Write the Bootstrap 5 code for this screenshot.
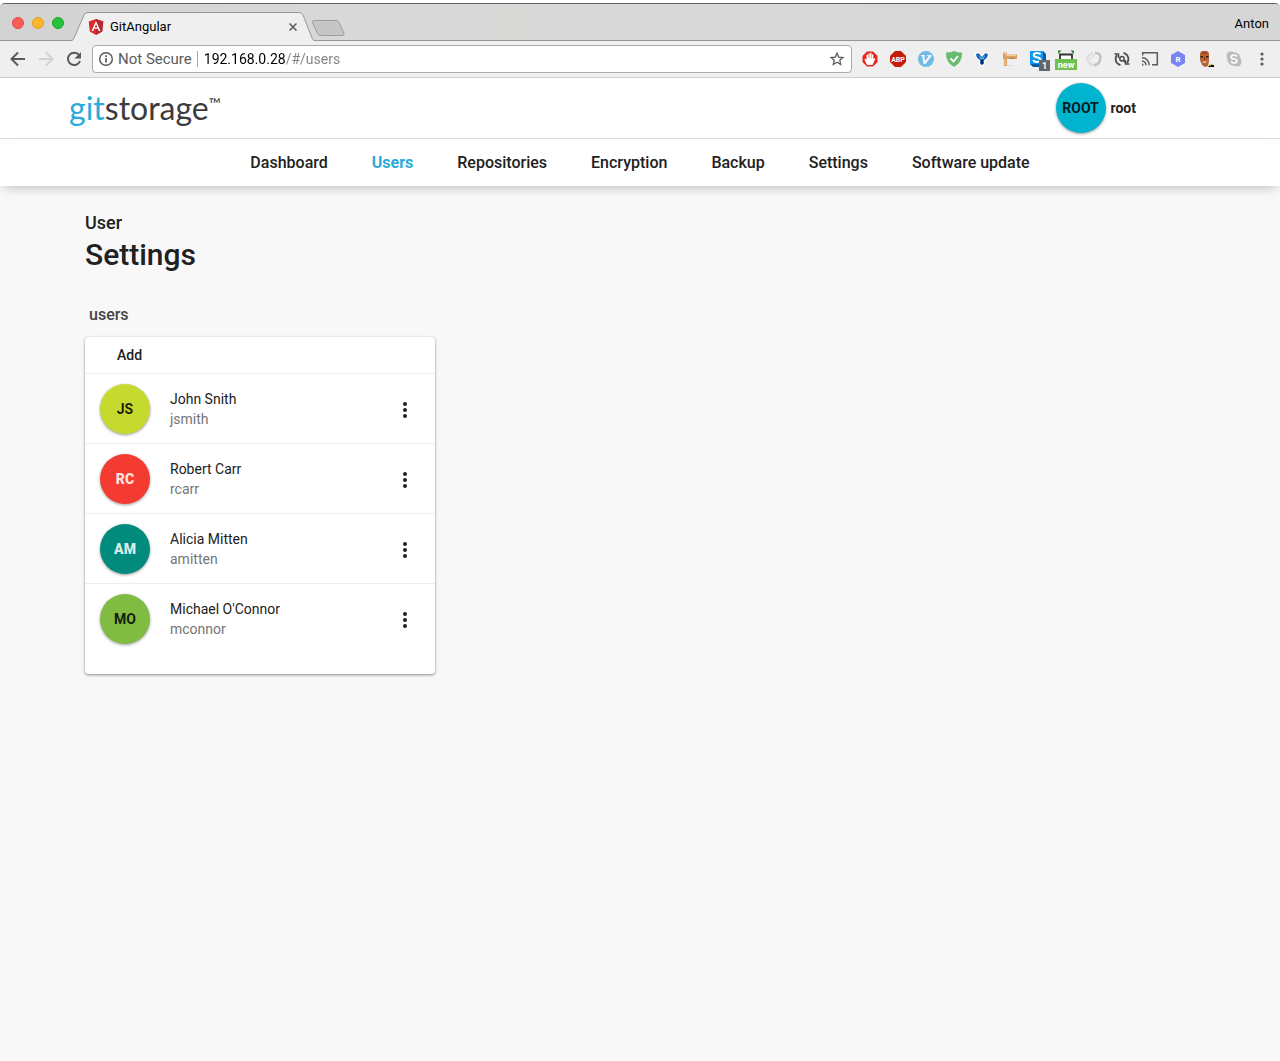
<!DOCTYPE html>
<html lang="en">
<head>
<meta charset="utf-8">
<meta name="viewport" content="width=device-width, initial-scale=1">
<title>GitAngular</title>
<link href="https://cdn.jsdelivr.net/npm/bootstrap@5.3.0/dist/css/bootstrap.min.css" rel="stylesheet">
<style>
  body { font-family: Roboto, "Liberation Sans", sans-serif; font-size: 14px; line-height: 20px; color: #212121; background: #fff; }
  button { font-family: inherit; }
  .window { min-height: calc(100vh - 3px); margin-top: 3px; background: #f8f8f8; border-top: 1px solid #5f5f62; border-radius: 5px 5px 0 0; overflow: hidden; }

  /* tab strip */
  .tab-strip { height: 37px; background: linear-gradient(90deg, #d2d2d2, #d9d9d8 30%, #d7d6d6); border-bottom: 1px solid #969696; padding: 0 11px 0 12px; font-size: 13px; color: #000; }
  .lights { gap: 8px; height: 38px; }
  .light { width: 12px; height: 12px; border-radius: 50%; border: 1px solid; padding: 0; }
  .light-close { background: #fc5b57; border-color: #e2463f; }
  .light-min { background: #fdb62c; border-color: #e0a022; }
  .light-max { background: #27c23c; border-color: #1ba72c; }
  .browser-tab { width: 242px; height: 29px; margin: 8px 0 -1px 8px; padding: 0 13px 0 16px; gap: 6px; }
  .tab-shape { position: absolute; left: 0; top: 0; z-index: -1; }
  .tab-close, .tool-btn, .more-btn { border: 0; background: none; padding: 0; display: flex; align-items: center; justify-content: center; }
  .tab-close { width: 16px; height: 16px; }

  /* toolbar */
  .toolbar { height: 37px; background: #efefef; border-bottom: 1px solid #cfcfcf; padding: 0 4px; }
  .tool-btn { width: 28px; height: 28px; flex: none; }
  .new-tab { width: 28px; height: 48px; }
  .tool-btn svg { display: block; overflow: visible; flex: none; }
  .address { height: 28px; background: #fff; border: 1px solid #a9a9a9; border-radius: 4px; font-size: 15px; margin: 0 4px; padding-left: 5px; }
  .secure-label { color: #5a5a5a; padding: 0 5px 0 4px; border-right: 1px solid #a5a5a5; line-height: 16px; white-space: nowrap; }
  .url-input { border: 0; outline: 0; padding: 0 0 0 6px; min-width: 0; height: 24px; font-size: 14px; color: transparent; background: linear-gradient(90deg, #000 88px, #808080 88px); -webkit-background-clip: text; background-clip: text; }

  /* application header */
  .app-container { --bs-gutter-x: 30px; max-width: 1140px; }
  .brand-bar { height: 61px; background: #fff; border-bottom: 1px solid #ddd; }
  .brand-word { font-family: Lato, sans-serif; font-size: 32px; line-height: 40px; color: #3c3c3e; text-decoration: none; margin: 0 0 0 -16px; }
  .brand-word b { font-weight: 400; color: #2babd9; }
  .brand-word sup { font-size: 16px; top: -10px; }
  .avatar { width: 50px; height: 50px; border-radius: 50%; font-weight: 700; color: rgba(0,0,0,.87); box-shadow: 0 1px 3px rgba(0,0,0,.4); flex: none; }
  .avatar-light { color: rgba(255,255,255,.87); font-weight: 900; }
  .bg-cyan { background: #00b4d0; }
  .bg-lime { background: #c6d92f; }
  .bg-red { background: #f43b31; }
  .bg-teal { background: #008b7c; }
  .bg-green { background: #7fbc41; }
  .account { gap: 5px; margin-right: 59px; padding: 0; border: 0; background: none; font-weight: 700; color: #212121; }
  .main-nav { height: 47px; background: #fff; box-shadow: 0 6px 10px -4px rgba(0,0,0,.22); font-size: 16px; font-weight: 500; }
  .main-nav .nav-link { padding: 0 22px; color: #212121; }
  .main-nav .nav-link.active { color: #2babd9; font-weight: 700; }

  /* page */
  .app-main { padding-top: 25px; }
  .page-kicker { font-size: 18px; line-height: 24px; font-weight: 500; margin: 0; }
  .page-title { font-size: 30px; line-height: 40px; font-weight: 500; margin: 0; }
  .section-name { font-size: 16px; line-height: 24px; font-weight: 500; color: #444; margin: 28px 0 10px 4px; }
  .user-card { max-width: 350px; border: 0; border-radius: 4px; box-shadow: 0 1px 3px rgba(0,0,0,.45); padding-bottom: 20px; }
  .add-btn { height: 37px; border: 0; border-bottom: 1px solid #eee; background: none; padding: 0 32px; text-align: left; font-weight: 500; color: #212121; }
  .user-row { height: 70px; padding: 0 15px; border-bottom: 1px solid #eee; color: #212121; }
  .user-row:last-child { border-color: transparent; }
  .login-name { color: #757575; }
  .more-btn { width: 30px; height: 30px; padding-top: 2px; }
</style>
<script src="https://cdn.jsdelivr.net/npm/bootstrap@5.3.0/dist/js/bootstrap.bundle.min.js"></script>
</head>
<body>
<div class="window">
  <div class="tab-strip d-flex align-items-start">
    <div class="lights d-flex align-items-center">
      <button class="light light-close" aria-label="Close window"></button>
      <button class="light light-min" aria-label="Minimise"></button>
      <button class="light light-max" aria-label="Full screen"></button>
    </div>
    <div class="browser-tab d-flex align-items-center position-relative z-1">
      <svg class="tab-shape" width="242" height="29"><path d="M0 28.500C1 28 1.500 27 2 26L12 3Q13.500.5 16 .5H227Q229.500.5 231 3L240 26C240.500 27 241 28 242 28.500V29H0Z" fill="#efefef"/><path d="M0 28.500C1 28 1.500 27 2 26L12 3Q13.500.5 16 .5H227Q229.500.5 231 3L240 26C240.500 27 241 28 242 28.500" fill="none" stroke="#969696"/></svg>
      <svg width="16" height="16" viewBox="0 0 16 16"><path d="M8 0 15.300 2.600 14.200 12.400 8 16 1.800 12.400.7 2.600Z" fill="#dd2a2f"/><path d="M8 0 15.300 2.600 14.200 12.400 8 16Z" fill="#b32a30"/><path d="M8 2 12.500 12H10.800L9.900 9.800H6.100L5.200 12H3.500ZM8 5.200 6.700 8.400H9.300Z" fill="#fff"/></svg>
      <span class="me-auto">GitAngular</span>
      <button class="tab-close" aria-label="Close tab"><svg width="8" height="8" viewBox="0 0 8 8"><path d="M.5.5l7 7M7.500.5l-7 7" stroke="#5a5a5a" stroke-width="1.500"/></svg></button>
    </div>
    <button class="tool-btn new-tab" aria-label="New tab"><svg width="32" height="16" viewBox="0 0 32 16"><path d="M2.500.5H24Q26 .5 27 2.500L32 13.500Q32.500 15.500 30 15.500H8.500Q6.500 15.500 5.500 13.500L.5 2.500Q0 .5 2.500.5Z" fill="#c6c6c6" stroke="#9b9b9b"/></svg></button>
    <span class="ms-auto align-self-center pt-1">Anton</span>
  </div>

  <div class="toolbar d-flex align-items-center">
    <button class="tool-btn" aria-label="Back"><svg width="16" height="16" viewBox="0 0 16 16" fill="none" stroke="#5a5a5a" stroke-width="2"><path d="M15 8H2M8 1.500 1.500 8 8 14.500"/></svg></button>
    <button class="tool-btn" aria-label="Forward" disabled><svg width="16" height="16" viewBox="0 0 16 16" fill="none" stroke="#d2d2d2" stroke-width="2"><path d="M1 8h13M8 1.500 14.500 8 8 14.500"/></svg></button>
    <button class="tool-btn" aria-label="Reload"><svg width="16" height="16" viewBox="0 0 16 16"><path d="M13.200 4.200A6.200 6.200 0 1 0 14 10" fill="none" stroke="#5a5a5a" stroke-width="2"/><path d="M15 1v6.500H8.500Z" fill="#5a5a5a"/></svg></button>
    <div class="address d-flex align-items-center flex-grow-1">
      <svg width="16" height="16" viewBox="0 0 16 16"><circle cx="8" cy="8" r="6.300" fill="none" stroke="#5a5a5a" stroke-width="1.500"/><path d="M7.200 7h1.700v4.500H7.200ZM7.200 4.300h1.700v1.700H7.200Z" fill="#5a5a5a"/></svg>
      <label class="secure-label" for="url">Not Secure</label>
      <input class="url-input flex-grow-1" id="url" type="text" value="192.168.0.28/#/users" spellcheck="false">
      <button class="tool-btn" aria-label="Bookmark"><svg width="14" height="14" viewBox="0 0 14 14"><path d="M7 1.200 8.700 5.100 13 5.500 9.800 8.300 10.700 12.500 7 10.300 3.300 12.500 4.200 8.300 1 5.500 5.300 5.100Z" fill="none" stroke="#5a5a5a" stroke-width="1.300"/></svg></button>
    </div>
    <button class="tool-btn" aria-label="AdBlock"><svg width="16" height="16" viewBox="0 0 16 16"><path d="M5 .5h6L15.500 5v6L11 15.500H5L.5 11V5Z" fill="#e8261d"/><path d="M5.200 14 3 10 2.600 7.500 4.500 8.600V4q.8-.8 1.400 0V7h.4V2.700q.8-.7 1.400 0V7h.4V2q.8-.7 1.400 0V7.300h.4V3.500q.8-.7 1.400 0V8L13 7q.5.500 0 1.500L10.500 14Z" fill="#fff"/></svg></button>
    <button class="tool-btn" aria-label="Adblock Plus"><svg width="16" height="16" viewBox="0 0 16 16"><path d="M5 0h6L16 5v6L11 16H5L0 11V5Z" fill="#c51c06"/><text x="8" y="10.500" text-anchor="middle" font-size="7" font-weight="700" fill="#fff">ABP</text></svg></button>
    <button class="tool-btn" aria-label="Vimeo helper"><svg width="16" height="16" viewBox="0 0 16 16"><circle cx="8" cy="8" r="8" fill="#72bbe8"/><path d="M3 4h4v1L6.500 5.500 7 10l3.500-4.500L9 4.500V4h4.500v1.200L7.500 13H5.500L4.300 5.500 3 5Z" fill="#eef7fd"/></svg></button>
    <button class="tool-btn" aria-label="AdGuard"><svg width="16" height="16" viewBox="0 0 16 16"><path d="M0 1.500Q4.500 1.500 8 0q3.500 1.500 8 1.500Q16.500 11.500 8 16-.5 11.500 0 1.500Z" fill="#68bc71"/><path d="m4.500 7.500 3 3L12 5" fill="none" stroke="#fff" stroke-width="1.800"/></svg></button>
    <button class="tool-btn" aria-label="Filter"><svg width="16" height="16" viewBox="0 0 16 16"><path d="M1.500 2.500 5 1.500 8 5l3-3.500 3.500 1Q14.500 7.500 10.500 9.500V13Q8 16 5.500 13V9.500Q1.500 7.500 1.500 2.500Z" fill="#1760b5" stroke="#fff" stroke-width="1.200"/><path d="M5 4 8 7l3-3-1 4H6Z" fill="#54b4ef"/><path d="M7 9h2v4H7Z" fill="#092a63"/></svg></button>
    <button class="tool-btn" aria-label="Ruler"><svg width="16" height="16" viewBox="0 0 16 16"><path d="M5 14.500h6" stroke="#ddd"/><path d="M1 1.500h4v2H15v4.500H5V15H1.800V8H1Z" fill="#dca06a"/><path d="M2 2.500h2v2H14M3 8v6" stroke="#f5cb95" fill="none"/><path d="M8 8V6.500M10 8V6.500M12 8V6.500" stroke="#9f6b37"/></svg></button>
    <button class="tool-btn" aria-label="Stylus"><svg width="16" height="16" viewBox="0 0 16 16"><path d="M0 0h13l3 3v13H3l-3-3Z" fill="#075d9f"/><path d="M0 0h13v13H0Z" fill="#0d98ef"/><path d="M10.300 3.500Q10 2 7 2 3.700 2 3.700 4.200 4 5.800 7 6.200T10.300 8.500 7 11Q3.700 11 3.300 8.900" fill="none" stroke="#fff" stroke-width="2"/><path d="M9 9h11v11H9Z" fill="#666"/><text x="14.500" y="17.500" text-anchor="middle" font-size="9" font-weight="700" fill="#fff">1</text></svg></button>
    <button class="tool-btn" aria-label="Capture"><svg width="22" height="20" viewBox="0 0 22 20"><path d="M5 10V5.500h12V10" fill="#fff" stroke="#333" stroke-width="1.800"/><path d="M3 1.500h3.500L3 5ZM19 1.500h-3.500L19 5Z" fill="#28802b"/><path d="M0 10h22v11H0Z" fill="#70c04f"/><text x="11" y="18.500" text-anchor="middle" font-size="9" font-weight="700" fill="#fff">new</text></svg></button>
    <button class="tool-btn" aria-label="Sync off"><svg width="16" height="16" viewBox="0 0 16 16" fill="none" stroke-width="2.500"><path d="M7 2Q0 4 2 9.500T9 14" stroke="#ddd"/><path d="M9 1.700Q15.500 2 14.300 8T8 14" stroke="#c2c2c2"/><path d="M9 4Q5 5 5 8.500" stroke="#e4e4e4"/></svg></button>
    <button class="tool-btn" aria-label="Refresh tool"><svg width="16" height="16" viewBox="0 0 16 16" fill="none" stroke="#4b4b4b" stroke-width="1.700"><path d="M9.500 1.800A6.400 6.400 0 0 1 13 12M6.500 14.200A6.400 6.400 0 0 1 3 4"/><path d="M.5 3h4v4M15.500 13h-4V9" stroke-width="1.500"/><circle cx="8" cy="7.800" r="2.200" stroke-width="1.500"/><path d="m9.500 9.500 2 2"/></svg></button>
    <button class="tool-btn" aria-label="Cast"><svg width="16" height="14" viewBox="0 0 16 14" fill="none" stroke="#5a5a5a" stroke-width="1.500"><path d="M.7 3.500V.8h14.600v11.900H10M0 5.800A7 7 0 0 1 7.200 13.300M0 9A4 4 0 0 1 4 13.300"/><path d="M0 11.200 2.200 13.400H0Z" fill="#5a5a5a" stroke="none"/></svg></button>
    <button class="tool-btn" aria-label="R tool"><svg width="16" height="16" viewBox="0 0 16 16"><path d="m8 0 7 4v8l-7 4-7-4V4Z" fill="#7886f5"/><text x="8" y="11" text-anchor="middle" font-size="8" font-weight="700" fill="#fff">R</text></svg></button>
    <button class="tool-btn" aria-label="Profile face"><svg width="16" height="16" viewBox="0 0 16 16"><path d="M2 2 4 0h5l2 2v8l-1 5-3 1-3-2L2 9Z" fill="#b66334"/><path d="M2.500 5H5v1.500H2.500ZM8 5h2.500v1.500H8Z" fill="#202022"/><path d="M4.500 11h4" stroke="#f7e4da" stroke-width="1.200"/><path d="M6.500 6v3M4 2h5" stroke="#7b351c"/><path d="m10 16 2-2.500 4 .5v2Z" fill="#111"/><path d="M11 13h2v1.500h-2Z" fill="#ffe021"/></svg></button>
    <button class="tool-btn" aria-label="Skype"><svg width="16" height="16" viewBox="0 0 16 16"><circle cx="5" cy="5" r="4.500" fill="#bdbdbd"/><circle cx="11" cy="11" r="4.500" fill="#bdbdbd"/><circle cx="8" cy="8" r="6.800" fill="#bdbdbd"/><path d="M10.800 5.500Q10 4 8 4 5.300 4 5.300 6T8 8t2.800 2-2.800 2Q6 12 5.200 10.300" fill="none" stroke="#fff" stroke-width="1.700"/></svg></button>
    <button class="tool-btn" aria-label="Browser menu"><svg width="4" height="14" viewBox="0 0 4 14" fill="#5a5a5a"><circle cx="2" cy="2" r="1.600"/><circle cx="2" cy="7" r="1.600"/><circle cx="2" cy="12" r="1.600"/></svg></button>
  </div>

  <header>
    <div class="brand-bar">
      <div class="container app-container h-100 d-flex align-items-center justify-content-between">
        <a class="brand-word" href="#"><b>git</b>storage<sup>™</sup></a>
        <button class="account d-flex align-items-center"><span class="avatar bg-cyan d-flex align-items-center justify-content-center">ROOT</span>root</button>
      </div>
    </div>
    <nav class="main-nav">
      <ul class="nav h-100 justify-content-center align-items-center">
        <li class="nav-item"><a class="nav-link" href="#">Dashboard</a></li>
        <li class="nav-item"><a class="nav-link active" aria-current="page" href="#">Users</a></li>
        <li class="nav-item"><a class="nav-link" href="#">Repositories</a></li>
        <li class="nav-item"><a class="nav-link" href="#">Encryption</a></li>
        <li class="nav-item"><a class="nav-link" href="#">Backup</a></li>
        <li class="nav-item"><a class="nav-link" href="#">Settings</a></li>
        <li class="nav-item"><a class="nav-link" href="#">Software update</a></li>
      </ul>
    </nav>
  </header>

  <main class="container app-container app-main">
    <h1 class="page-kicker">User</h1>
    <h2 class="page-title">Settings</h2>
    <h3 class="section-name">users</h3>
    <div class="card user-card">
      <button class="add-btn">Add</button>
      <ul class="list-unstyled mb-0">
        <li class="user-row d-flex align-items-center">
          <span class="avatar bg-lime d-flex align-items-center justify-content-center">JS</span>
          <div class="flex-grow-1 px-3 ms-1"><div>John Snith</div><div class="login-name">jsmith</div></div>
          <button class="more-btn" aria-label="Actions for John Snith"><svg width="4" height="16" viewBox="0 0 4 16" fill="#212121"><circle cx="2" cy="2" r="2"/><circle cx="2" cy="8" r="2"/><circle cx="2" cy="14" r="2"/></svg></button>
        </li>
        <li class="user-row d-flex align-items-center">
          <span class="avatar avatar-light bg-red d-flex align-items-center justify-content-center">RC</span>
          <div class="flex-grow-1 px-3 ms-1"><div>Robert Carr</div><div class="login-name">rcarr</div></div>
          <button class="more-btn" aria-label="Actions for Robert Carr"><svg width="4" height="16" viewBox="0 0 4 16" fill="#212121"><circle cx="2" cy="2" r="2"/><circle cx="2" cy="8" r="2"/><circle cx="2" cy="14" r="2"/></svg></button>
        </li>
        <li class="user-row d-flex align-items-center">
          <span class="avatar avatar-light bg-teal d-flex align-items-center justify-content-center">AM</span>
          <div class="flex-grow-1 px-3 ms-1"><div>Alicia Mitten</div><div class="login-name">amitten</div></div>
          <button class="more-btn" aria-label="Actions for Alicia Mitten"><svg width="4" height="16" viewBox="0 0 4 16" fill="#212121"><circle cx="2" cy="2" r="2"/><circle cx="2" cy="8" r="2"/><circle cx="2" cy="14" r="2"/></svg></button>
        </li>
        <li class="user-row d-flex align-items-center">
          <span class="avatar bg-green d-flex align-items-center justify-content-center">MO</span>
          <div class="flex-grow-1 px-3 ms-1"><div>Michael O'Connor</div><div class="login-name">mconnor</div></div>
          <button class="more-btn" aria-label="Actions for Michael O'Connor"><svg width="4" height="16" viewBox="0 0 4 16" fill="#212121"><circle cx="2" cy="2" r="2"/><circle cx="2" cy="8" r="2"/><circle cx="2" cy="14" r="2"/></svg></button>
        </li>
      </ul>
    </div>
  </main>
</div>
</body>
</html>
